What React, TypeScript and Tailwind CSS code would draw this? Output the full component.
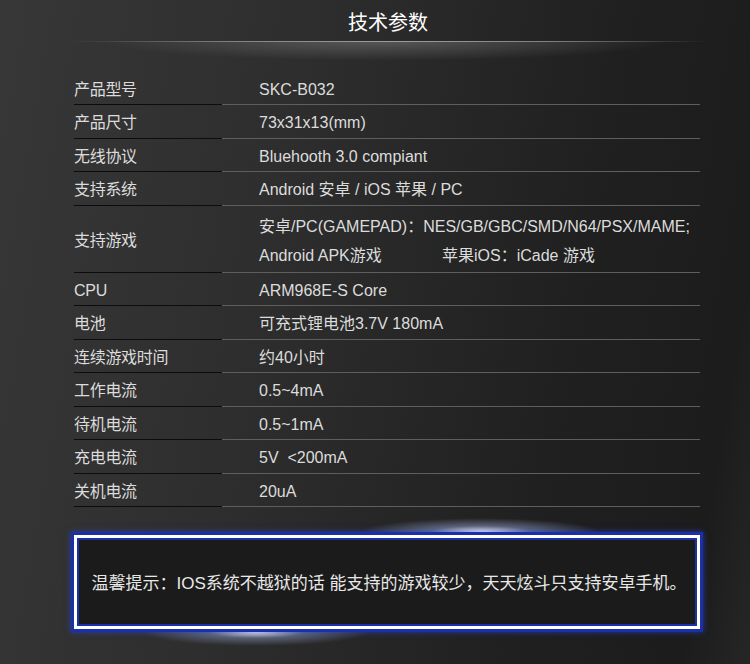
const rows: { label: string; value: React.ReactNode; tall?: boolean }[] = [
  { label: "产品型号", value: "SKC-B032" },
  { label: "产品尺寸", value: "73x31x13(mm)" },
  { label: "无线协议", value: "Bluehooth 3.0 compiant" },
  { label: "支持系统", value: "Android 安卓 / iOS 苹果 / PC" },
  {
    label: "支持游戏",
    tall: true,
    value: (
      <div className="flex flex-col leading-[29px]">
        <span>安卓/PC(GAMEPAD)：NES/GB/GBC/SMD/N64/PSX/MAME;</span>
        <span className="flex">
          <span className="w-[183px]">Android APK游戏</span>
          <span>苹果iOS：iCade 游戏</span>
        </span>
      </div>
    ),
  },
  { label: "CPU", value: "ARM968E-S Core" },
  { label: "电池", value: "可充式锂电池3.7V 180mA" },
  { label: "连续游戏时间", value: "约40小时" },
  { label: "工作电流", value: "0.5~4mA" },
  { label: "待机电流", value: "0.5~1mA" },
  { label: "充电电流", value: "5V  <200mA" },
  { label: "关机电流", value: "20uA" },
];

export default function App() {
  return (
    <div
      className="relative h-[664px] w-[750px] overflow-hidden bg-[linear-gradient(100deg,#373737_0%,#2e2e2e_35%,#202020_72%,#1c1c1c_92%,#262626_100%)] text-[#dcdcdc]"
      style={{ fontFamily: '"Liberation Sans", "Noto Sans CJK SC", sans-serif' }}
    >
      <div className="flex h-[41px] items-center justify-center pl-[26px] pt-[5px] text-[20px] text-white">
        技术参数
      </div>
      <div className="relative h-[30px]">
        <div className="absolute left-[70px] right-[40px] top-0 h-px bg-[linear-gradient(90deg,transparent,#7a7a7a_25%,#999_50%,#7a7a7a_75%,transparent)]" />
        <div className="absolute left-[100px] right-[80px] top-0 h-[20px] bg-[radial-gradient(ellipse_at_top,rgba(160,160,160,0.38),transparent_70%)]" />
      </div>

      <div className="ml-[74px] mt-[0.5px] w-[626px] text-[16px]">
        {rows.map((r) => (
          <div key={r.label} className={`flex ${r.tall ? "h-[67px]" : "h-[33.5px]"}`}>
            <div className="flex w-[148px] items-center border-b border-[#0c0c0c] pt-[4px] tracking-[-0.3px]">
              {r.label}
            </div>
            <div className="flex flex-1 items-center whitespace-pre border-b border-[#5e5e5e] pl-[37px] pt-[4px]">
              {r.value}
            </div>
          </div>
        ))}
      </div>

      <div className="relative ml-[71px] mt-[25px] w-[632px]">
        <div className="pointer-events-none absolute left-[290px] top-[-14px] h-[28px] w-[240px] bg-[radial-gradient(ellipse_at_center,rgba(255,255,255,0.95),rgba(180,200,255,0.4)_30%,transparent_70%)]" />
        <div className="pointer-events-none absolute bottom-[-14px] left-[70px] h-[28px] w-[230px] bg-[radial-gradient(ellipse_at_center,rgba(255,255,255,0.9),rgba(180,200,255,0.35)_30%,transparent_70%)]" />
        <div className="relative border-[3px] border-[#1b2fa6] shadow-[0_0_6px_rgba(40,70,255,0.6)]">
          <div className="border-[3px] border-white">
            <div className="flex h-[88px] items-center justify-center border-2 border-[#1b2fa6] bg-[#1b1b1b] pl-[4px] pt-[3px] text-[17px] text-[#e8e8e8]">
              温馨提示：IOS系统不越狱的话 能支持的游戏较少，天天炫斗只支持安卓手机。
            </div>
          </div>
        </div>
      </div>
    </div>
  );
}
